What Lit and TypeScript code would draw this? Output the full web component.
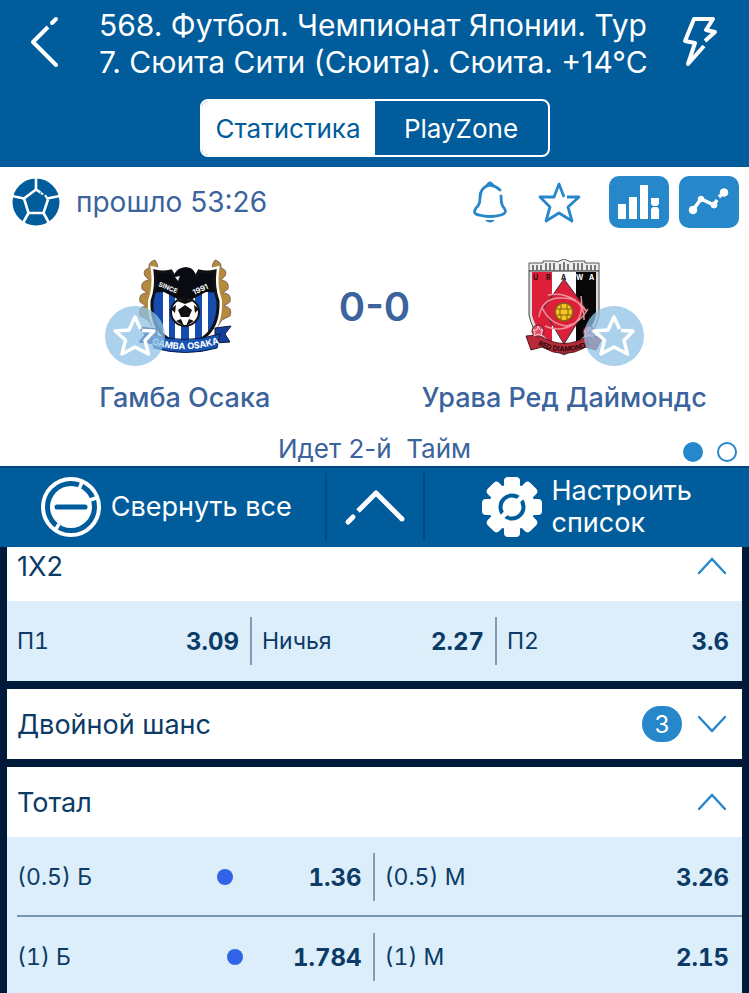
import { LitElement, html, css, svg, nothing } from "lit";
import { customElement, property, state } from "lit/decorators.js";

const ballIcon = svg`<svg width="48" height="48" viewBox="0 0 48 48" aria-hidden="true">
  <circle cx="24" cy="24" r="23.5" fill="#005c9b"/>
  <g fill="none" stroke="#fff" stroke-width="2.6">
    <path d="M28.5 14.5 L24 11.5 L12 20.5 L16.5 35 H31.5 L36 21.5"/>
    <path d="M29 14.8 L31 16.5 M33 17 L36 21.5" stroke-width="2.2"/>
    <path d="M24 0 V11.5 M12 20.5 L0 18 M16.5 35 L11 45 M31.5 35 L37 45 M35 20.5 L48 18"/>
  </g>
</svg>`;

const LAUREL = "M17 1 Q10 3 11 9 Q4 11 7 17 L11 21 Q2 22 4 30 L9 34 Q0 34 2 43 L8 47 Q-1 48 2 57 L10 61 L16 70 L27 68 Q15 60 13 48 Q12 38 15 30 Q18 22 16 15 Q23 9 17 1Z";
const SHIELD = "M17 12 Q25 14 33 12 L38 20 H57 L61 12 Q69 14 77 12 Q75 28 80 42 Q81 68 65 79 Q55 85 47 89 Q39 85 29 79 Q13 68 14 42 Q19 28 17 12Z";

const gambaCrest = svg`<svg width="94" height="98" viewBox="0 0 94 98" role="img" aria-label="Gamba Osaka">
  <defs>
    <clipPath id="gs"><path d=${SHIELD}/></clipPath>
    <path id="ribbon" d="M13 85 Q46 96 82 84"/>
  </defs>
  <g fill="#b58a3d" stroke="#6f5a55" stroke-width=".8">
    <path d=${LAUREL}/>
    <path transform="matrix(-1 0 0 1 94 0)" d=${LAUREL}/>
  </g>
  <path d=${SHIELD} fill="#fff" stroke="#fff" stroke-width="8"/>
  <g clip-path="url(#gs)">
    <rect width="94" height="98" fill="#fff"/>
    <path d="M12 12h13v75H12z M31 12h6v75h-6z M43 12h8v75h-8z M57 12h7v75h-7z M70 12h12v75H70z" fill="#164bb0"/>
    <path d="M12 8 H82 V34 L68 33 L47 44 L26 33 L12 34Z" fill="#080b12"/>
  </g>
  <path d=${SHIELD} fill="none" stroke="#111" stroke-width="3"/>
  <path d="M35 21 Q36 9 48 8 Q58 9 58 19 L58 28 H40 L43 20Z" fill="#080b12"/>
  <path d="M37 18 L42 17 L40 22Z" fill="#e9e9e9"/>
  <text x="20" y="27" transform="rotate(22 20 27)" class="crest-text" font-size="6.5">SINCE</text>
  <text x="56" y="36" transform="rotate(-24 56 36)" class="crest-text" font-size="7.5">1991</text>
  <circle cx="47" cy="53" r="14" fill="#fff" stroke="#111" stroke-width="2"/>
  <path d="M47 46 L54 51 L51 58 H43 L40 51Z M39 42 L47 39 L55 42 L47 45Z M33 50 L38 46 L37 54Z M61 50 L56 46 L57 54Z M38 62 L43 60 L46 67Z M56 62 L51 60 L48 67Z" fill="#111"/>
  <path d="M1 68 L19 70 V85 L1 83 L7 76Z M93 67 L77 69 V84 L92 83 L87 75Z" fill="#153f97" stroke="#071a48"/>
  <path d="M12 75 Q46 86 82 75 L79 89 Q47 98 16 89Z" fill="#1654b3" stroke="#071a48"/>
  <text class="crest-text" font-size="9"><textPath href="#ribbon" startOffset="50%" text-anchor="middle">GAMBA OSAKA</textPath></text>
</svg>`;

const urawaCrest = svg`<svg width="78" height="98" viewBox="0 0 78 98" role="img" aria-label="Urawa Red Diamonds">
  <defs>
    <clipPath id="us"><path d="M7 13 H71 V56 Q66 78 39 91 Q12 78 7 56Z"/></clipPath>
    <path id="scroll" d="M11 85 Q39 100 67 85"/>
  </defs>
  <path d="M4 12 V4 H18 V2 H29 L32 3 L39 0 L46 3 L49 2 H60 V4 H74 V12Z" fill="#eee" stroke="#555"/>
  <path d="M8 6 V11 M12 6 V11 M16 6 V11 M21 4 V11 M25 4 V11 M29 4 V11 M35 5 V11 M39 3 V11 M43 5 V11 M49 4 V11 M53 4 V11 M57 4 V11 M62 6 V11 M66 6 V11 M70 6 V11" stroke="#444" stroke-width="1.4"/>
  <path d="M4 12 H74 V56 Q69 82 39 96 Q9 82 4 56Z" fill="#ddd" stroke="#444"/>
  <g clip-path="url(#us)">
    <rect x="5" y="12" width="23" height="83" fill="#dc2039"/><rect x="27" y="12" width="24" height="83" fill="#fff"/><rect x="51" y="12" width="22" height="83" fill="#080808"/>
    <path d="M39 20 L61 50 L39 85 L18 50Z" fill="#dc2039" stroke="#333"/>
    <g fill="none" stroke="#f0929d" stroke-width="1.5">
      <path d="M14 58 Q17 38 37 39 Q53 39 61 52 M20 67 Q34 74 49 65 Q59 57 56 37 M23 36 Q37 33 50 41 Q60 48 59 61 M17 48 Q24 65 42 67 Q55 64 63 50"/>
    </g>
    <circle cx="39" cy="53" r="9" fill="#f2c521" stroke="#8a5b12" stroke-width="1.5"/>
    <path d="M31 50 H47 M31 56 H47 M36 45 V50 M42 45 V50 M35 50 V56 M43 50 V56 M36 56 V61 M42 56 V61" stroke="#8a5b12"/>
  </g>
  <g font-size="7">
    <text x="8" y="21" class="crest-dark">U</text><text x="21" y="21" class="crest-dark">R</text><text x="36" y="21" class="crest-dark">A</text>
    <text x="51" y="21" class="crest-text">W</text><text x="64" y="21" class="crest-text">A</text>
  </g>
  <path d="M1 77 L14 76 Q39 93 64 76 L77 79 L71 91 L61 88 Q39 101 17 88 L6 91Z" fill="#b92a38" stroke="#541820"/>
  <text class="crest-dark" font-size="7"><textPath href="#scroll" startOffset="50%" text-anchor="middle">RED DIAMONDS</textPath></text>
  <g fill="#df5068" stroke="#68202e"><circle cx="13" cy="72" r="6"/><circle cx="64" cy="73" r="6"/></g>
  <path d="M13 67 L15 71 L18 71 L16 74 L17 77 L13 75 L9 77 L10 73 L8 71 L12 71Z M64 68 L66 72 L69 72 L67 75 L68 78 L64 76 L60 78 L61 74 L59 72 L63 72Z" fill="none" stroke="#ffd0d5"/>
</svg>`;

const favStar = svg`<svg width="44" height="42" viewBox="0 0 44 42" fill="none" stroke="#fff" stroke-width="3.4" stroke-linejoin="round">
  <path d="M29 15.5 L41 16 L32 25.5 L35.5 39 L22 32 L9 39 L12.5 25 L2 16 L16 15 L22 2 L27.5 14"/>
</svg>`;

interface Odd { name: string; value: string; dot?: boolean }
interface Market { title: string; open: boolean; count?: number; rows: Odd[][] }

@customElement("market-card")
export class MarketCard extends LitElement {
  @property({ attribute: false }) market!: Market;
  static styles = css`
    :host { display: block; background: #fff; color: #0b3b66; }
    .head {
      width: 100%; height: 70px; padding: 0 14px 0 10px; border: 0; background: #fff; color: inherit;
      display: flex; align-items: center; font: 400 27px Inter, "Noto Sans", sans-serif; text-align: left; cursor: pointer;
    }
    :host([tucked]) .head { height: 54px; padding-bottom: 16px; }
    .title { flex: 1; }
    .count {
      min-width: 40px; height: 36px; border-radius: 18px; margin-right: 14px; background: #2787cb; color: #fff;
      display: grid; place-items: center; font-size: 24px;
    }
    .row { display: flex; align-items: center; height: 80px; padding-right: 6px; background: #dceefa; }
    .row + .row { position: relative; }
    .row + .row::before { content: ""; position: absolute; top: -2px; left: 10px; right: 0; height: 2px; background: #7595b2; }
    .odd {
      flex: 1; box-sizing: border-box; display: flex; align-items: center; height: 48px; padding: 0 11px 0 10px; border: 0; background: none;
      color: inherit; font: 400 23px Inter, "Noto Sans", sans-serif; font-variant-numeric: tabular-nums; cursor: pointer;
    }
    .odd + .odd { border-left: 2px solid #7f9dba; }
    .odd:last-child { padding-right: 7px; }
    .name { flex: 1; text-align: left; }
    .value { font-weight: 700; font-size: 24px; }
    .dot { width: 16px; height: 16px; border-radius: 50%; background: #3063e6; margin-right: 76px; }
    .dot.long { margin-right: 50px; }
  `;
  render() {
    const m = this.market;
    return html`
      <button class="head" aria-expanded=${m.open ? "true" : "false"}>
        <span class="title">${m.title}</span>
        ${m.count ? html`<span class="count">${m.count}</span>` : nothing}
        <svg width="32" height="20" viewBox="0 0 32 20" fill="none" stroke="#2787cb" stroke-width="2.4" stroke-linecap="round">
          <path d=${m.open ? "M3 17 L16 3 L29 17" : "M3 3 L16 17 L29 3"}/>
        </svg>
      </button>
      ${m.open ? m.rows.map((r) => html`<div class="row">${r.map((o) => html`
        <button class="odd"><span class="name">${o.name}</span>${o.dot ? html`<span class="dot ${o.value.length > 4 ? "long" : ""}"></span>` : nothing}<span class="value">${o.value}</span></button>`)}
      </div>`) : nothing}`;
  }
}

@customElement("app-root")
export class AppRoot extends LitElement {
  @state() private markets: Market[] = [
    { title: "1X2", open: true, rows: [[{ name: "П1", value: "3.09" }, { name: "Ничья", value: "2.27" }, { name: "П2", value: "3.6" }]] },
    { title: "Двойной шанс", open: false, count: 3, rows: [] },
    { title: "Тотал", open: true, rows: [
      [{ name: "(0.5) Б", value: "1.36", dot: true }, { name: "(0.5) М", value: "3.26" }],
      [{ name: "(1) Б", value: "1.784", dot: true }, { name: "(1) М", value: "2.15" }],
    ] },
  ];

  static styles = css`
    :host {
      display: flex; flex-direction: column; height: 100vh; overflow: hidden; background: #001b3a;
      font-family: Inter, "Noto Sans", sans-serif; color: #3b639c;
    }
    button { font: inherit; color: inherit; border: 0; padding: 0; background: none; cursor: pointer; }
    svg { display: block; }
    .top { background: #005c9b; color: #fff; padding: 7px 0 10px; flex: none; }
    .titlebar { display: flex; justify-content: space-between; gap: 27px; height: 74px; padding: 0 21px 0 16px; }
    .titlebar button { width: 56px; flex: none; display: flex; justify-content: center; padding-top: 7px; align-items: flex-start; }
    h1 { margin: 0; flex: 1; min-width: 0; font-size: 30px; line-height: 37px; font-weight: 400; white-space: nowrap; }
    .seg { display: flex; width: 350px; height: 58px; margin: 18px auto 0; border: 2px solid #fff; border-radius: 8px; overflow: hidden; box-sizing: border-box; }
    .seg button { flex: 1; font-size: 26px; }
    .seg .on { background: #fff; color: #005c9b; }
    .match { background: #fff; flex: none; }
    .tools { display: flex; align-items: center; height: 70px; padding: 0 10px 0 12px; }
    .clock { margin-left: 16px; font-size: 28px; flex: 1; }
    .tools .plain { margin-right: 28px; }
    .tile { width: 60px; height: 52px; border-radius: 10px; background: #2787cb; display: grid; place-items: center; }
    .tools .tile + .tile { margin-left: 10px; }
    .teams { display: grid; grid-template-columns: 1fr 90px 1fr; padding: 22px 40px 0; height: 174px; box-sizing: border-box; }
    .team { display: flex; flex-direction: column; align-items: center; font-size: 27px; font-weight: 500; white-space: nowrap; }
    .crest { position: relative; height: 98px; margin-bottom: 24px; }
    .crest-text { font-family: Inter, sans-serif; font-weight: 700; fill: #fff; }
    .crest-dark { font-family: Inter, sans-serif; font-weight: 700; fill: #220d12; }
    .fav { position: absolute; width: 60px; height: 60px; border-radius: 50%; background: rgb(143 194 230 / 75%); display: grid; place-items: center; bottom: -9px; }
    .home .fav { left: -33px; }
    .away .fav { right: -41px; }
    .score { font-size: 40px; font-weight: 600; line-height: 44px; text-align: center; padding-top: 26px; }
    .status { display: grid; grid-template-columns: 1fr auto 1fr; align-items: center; height: 55px; padding: 0 12px; font-size: 26px; white-space: pre; }
    .status .period { grid-column: 2; padding-top: 20px; }
    .dots { display: flex; justify-content: flex-end; gap: 14px; padding-top: 26px; }
    .dots i { width: 20px; height: 20px; box-sizing: border-box; border: 2px solid #2787cb; border-radius: 50%; }
    .dots .on { background: #2787cb; }
    .actions { flex: none; display: grid; grid-template-columns: 1fr 100px 1fr; height: 81px; box-sizing: border-box; border-top: 2px solid #00457f; background: #005c9b; color: #fff; font-size: 27px; padding: 5px 0 6px; }
    .actions button { display: flex; align-items: center; justify-content: center; gap: 10px; text-align: left; line-height: 32px; }
    .actions .collapse { padding-left: 8px; }
    .actions .up { border: solid #004a87; border-width: 0 2px; }
    .list { display: flex; flex-direction: column; gap: 8px; padding: 0 7px; overflow: hidden; flex: 1; min-height: 0; }
    .list market-card { flex: none; }
  `;

  render() {
    return html`
      <header class="top">
        <div class="titlebar">
          <button aria-label="Назад">
            <svg width="30" height="54" viewBox="0 0 30 54" fill="none" stroke="#fff" stroke-width="4" stroke-linejoin="round"><path d="M27 5 L23 9" stroke-linecap="round"/><path d="M19 13 L4 28 L27 51"/><circle cx="27" cy="51" r="2" fill="#fff" stroke="none"/></svg>
          </button>
          <h1>568. Футбол. Чемпионат Японии. Тур<br>7. Сюита Сити (Сюита). Сюита. +14°C</h1>
          <button aria-label="Быстрая ставка">
            <svg width="36" height="54" viewBox="0 0 36 54" fill="none" stroke="#fff" stroke-width="4" stroke-linejoin="round"><path d="M23 27 L33 18 L24 16 L31 5 H12 L3 27 L13 29 L6 50 L22 32"/></svg>
          </button>
        </div>
        <nav class="seg"><button class="on">Статистика</button><button>PlayZone</button></nav>
      </header>

      <section class="match">
        <div class="tools">
          ${ballIcon}<span class="clock">прошло 53:26</span>
          <button class="plain" aria-label="Уведомления">
            <svg width="36" height="44" viewBox="0 0 36 44" fill="none" stroke="#2787cb" stroke-width="2.8" stroke-linecap="round"><path d="M27 10 Q23 6 17 5 Q7 7 7 18 Q7 25 3 28 Q-1 34 6 35 Q17 38 28 35 Q35 33 31 28 Q28 25 28 16"/><path d="M12 6 Q17 -3 22 6Z M12 40 H22 Q17 45 12 40Z" fill="#2787cb" stroke="none"/></svg>
          </button>
          <button class="plain" aria-label="В избранное">
            <svg width="44" height="44" viewBox="0 0 44 44" fill="none" stroke="#2787cb" stroke-width="2.8" stroke-linejoin="round"><path d="M27 17 L22 4 L17 17 L3 17 L13 27 L9 41 L22 33 L35 41 L31 27 L42 17 H30"/></svg>
          </button>
          <button class="tile" aria-label="Статистика">
            <svg width="42" height="34" viewBox="0 0 42 34" fill="#fff"><path d="M0 19h8v15H0z M11 12h8v22h-8z M22 0h8v34h-8z M33 13h8v6l-2 2h-4l-2-2z M33 34v-10l2-2h4l2 2v10z"/></svg>
          </button>
          <button class="tile" aria-label="График">
            <svg width="42" height="28" viewBox="0 0 42 28" fill="#fff" stroke="#fff"><path d="M5 22 L13 11 L26 17 L29 12 M31 9 L36 4" fill="none" stroke-width="3.5"/><circle cx="5" cy="22" r="3.8"/><circle cx="13" cy="11" r="2.8"/><circle cx="26" cy="17" r="3"/><circle cx="36" cy="4.5" r="3.8"/></svg>
          </button>
        </div>

        <div class="teams">
          <div class="team home"><div class="crest">${gambaCrest}<button class="fav" aria-label="Гамба Осака в избранное">${favStar}</button></div>Гамба Осака</div>
          <div class="score">0-0</div>
          <div class="team away"><div class="crest">${urawaCrest}<button class="fav" aria-label="Урава Ред Даймондс в избранное">${favStar}</button></div>Урава Ред Даймондс</div>
        </div>

        <div class="status"><span class="period">Идет 2-й  Тайм</span><span class="dots"><i class="on"></i><i></i></span></div>
      </section>

      <nav class="actions">
        <button class="collapse">
          <svg width="60" height="60" viewBox="0 0 60 60" fill="none"><circle cx="30" cy="30" r="28" stroke="#fff" stroke-width="4"/><circle cx="30" cy="30" r="21" fill="#fff"/><path d="M16 30 H44" stroke="#005c9b" stroke-width="5" stroke-linecap="round"/><path d="M38 12 L41 5 M49 23 L55 21 M18 47 L15 52" stroke="#fff" stroke-width="3.5"/></svg>
          <span>Свернуть все</span>
        </button>
        <button class="up" aria-label="Вверх">
          <svg width="62" height="38" viewBox="0 0 62 38" fill="none" stroke="#fff" stroke-width="5" stroke-linejoin="round"><path d="M4 34 L9 29" stroke-linecap="round"/><path d="M14 23 L32 5 L58 31"/><circle cx="58" cy="31" r="2.5" fill="#fff" stroke="none"/></svg>
        </button>
        <button>
          <svg width="60" height="60" viewBox="-30 -30 60 60"><g fill="#fff"><circle r="23"/>${[0, 45, 90, 135].map((a) => svg`<rect x="-8" y="-30" width="16" height="60" rx="4" transform=${`rotate(${a})`}/>`)}</g><circle r="11.5" fill="none" stroke="#005c9b" stroke-width="4"/><path d="M-12 12 L12 -12" stroke="#fff" stroke-width="5"/></svg>
          <span>Настроить<br>список</span>
        </button>
      </nav>

      <main class="list">
        ${this.markets.map((m, i) => html`<market-card .market=${m} ?tucked=${i === 0}></market-card>`)}
      </main>`;
  }
}
